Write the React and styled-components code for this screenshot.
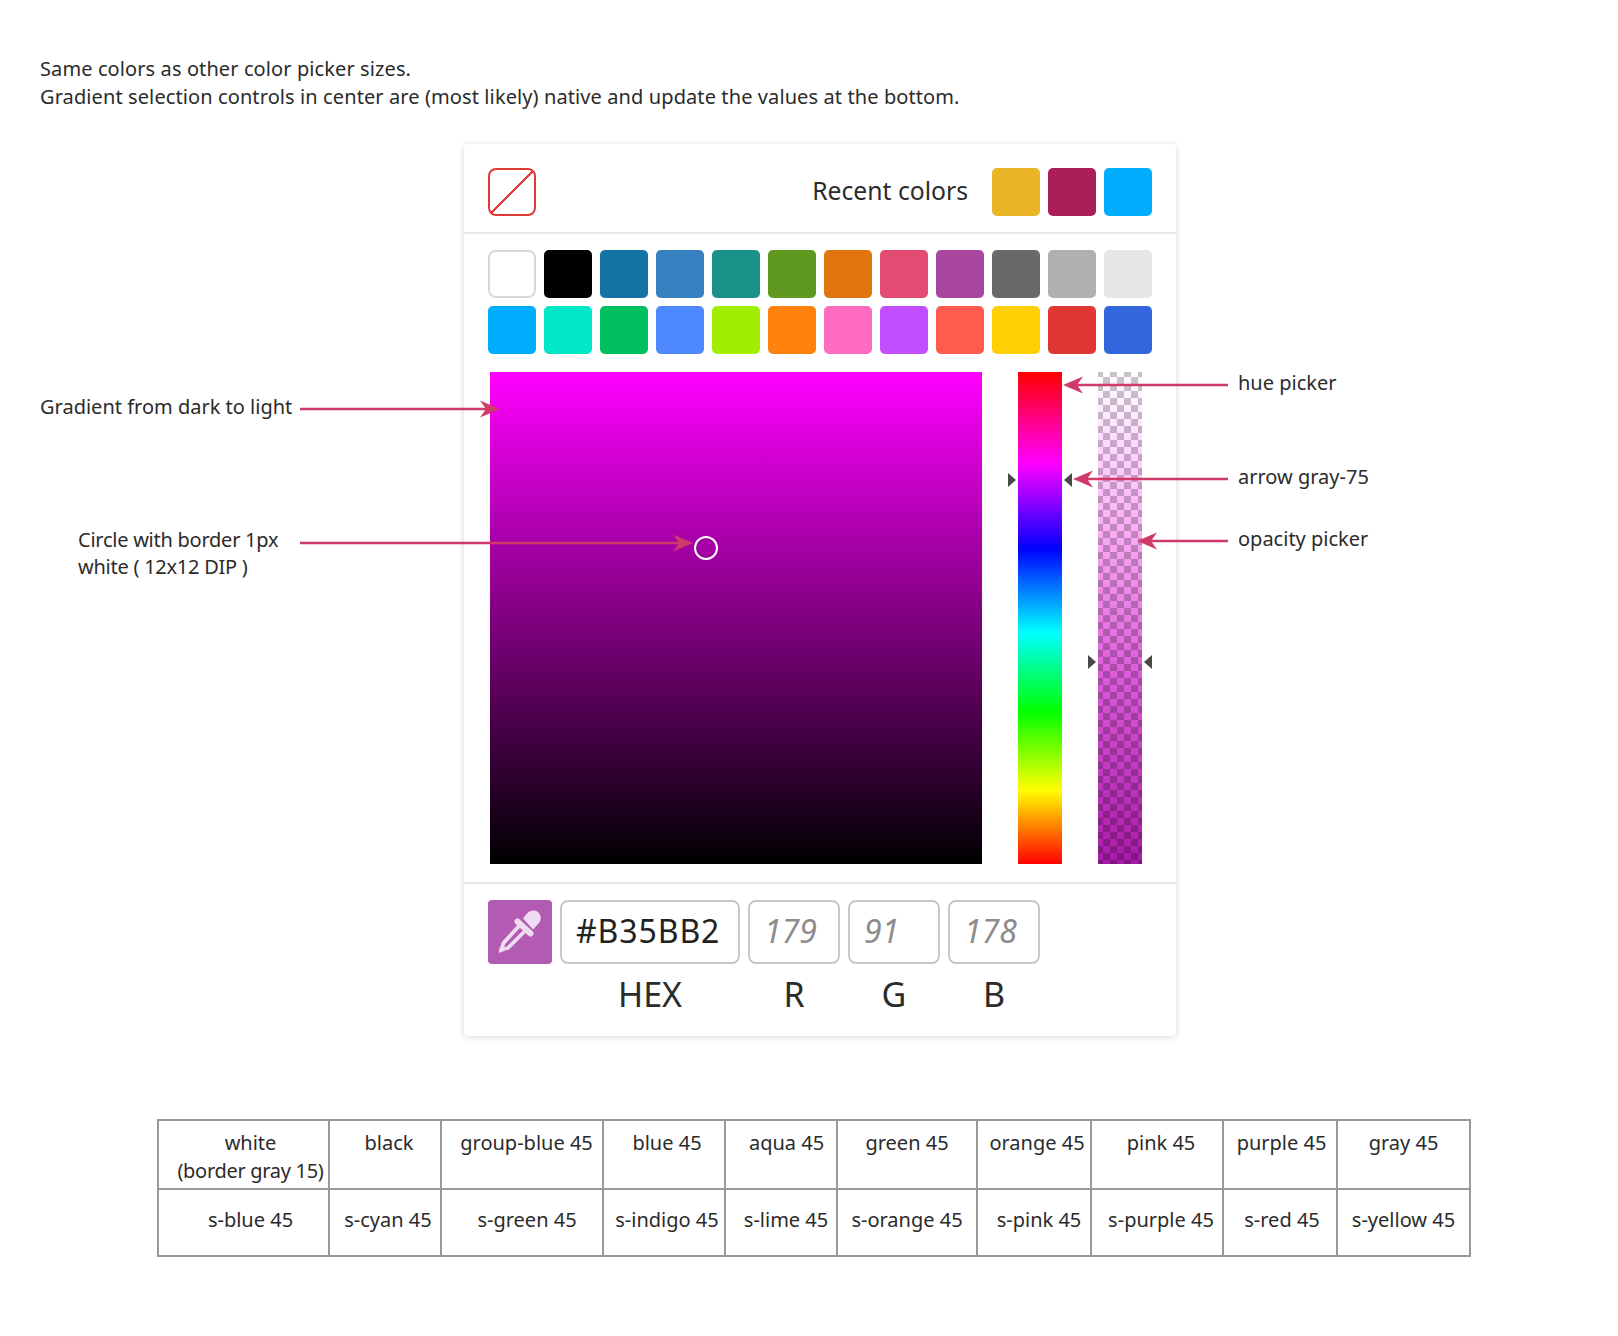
import React from "react";
import styled, { createGlobalStyle } from "styled-components";

const Global = createGlobalStyle`
  html, body { margin: 0; padding: 0; background: #fff; }
  body { font-family: "Noto Sans", "Open Sans", sans-serif; color: #2b2b2b; }
  * { box-sizing: border-box; }
`;

const Page = styled.div`
  position: relative;
  width: 1618px;
  min-height: 1336px;
  padding: 55px 40px 0;
`;
const Intro = styled.p`
  margin: 0 0 33px;
  font-size: 20px;
  line-height: 28px;
  letter-spacing: 0.1px;
`;
const Workspace = styled.div`
  display: grid;
  grid-template-columns: 424px 712px 1fr;
`;
const Side = styled.div`
  display: flex;
  flex-direction: column;
  padding-left: ${(p) => p.$pad || 0}px;
`;
const Note = styled.div`
  margin-top: ${(p) => p.$top}px;
  margin-left: ${(p) => p.$indent || 0}px;
  font-size: 20px;
  line-height: ${(p) => (p.$tight ? 27 : 28)}px;
  letter-spacing: ${(p) => (p.$tight ? "-0.25px" : "0")};
`;
const Panel = styled.div`
  height: 892px;
  background: #fff;
  border-radius: 4px;
  box-shadow: 0 1px 6px rgba(0, 0, 0, 0.16);
  display: flex;
  flex-direction: column;
`;
const Header = styled.div`
  height: 90px;
  padding: 24px 24px 0;
  border-bottom: 2px solid #e8e8e8;
  display: flex;
  align-items: flex-start;
  gap: 8px;
`;
const NoColor = styled.div`
  width: 48px;
  height: 48px;
  border: 2px solid #e03a36;
  border-radius: 8px;
  background: linear-gradient(to bottom right, transparent calc(50% - 1.2px), #e03a36 calc(50% - 1.2px), #e03a36 calc(50% + 1.2px), transparent calc(50% + 1.2px));
  margin-right: auto;
`;
const RecentLabel = styled.span`
  font-size: 24.7px;
  line-height: 46px;
  margin-right: 16px;
`;
const Swatch = styled.div`
  width: 48px;
  height: 48px;
  background: ${(p) => p.$color};
  border: ${(p) => (p.$outlined ? "2px solid #d8d8d8" : "none")};
  border-radius: ${(p) => (p.$outlined ? "8px" : "5px")};
`;
const SwatchGrid = styled.div`
  display: grid;
  grid-template-columns: repeat(12, 48px);
  gap: 8px;
  padding: 16px 24px 0;
`;
const Pickers = styled.div`
  display: flex;
  gap: 36px;
  margin: 18px 0 0 26px;
  height: 492px;
`;
const Field = styled.div`
  position: relative;
  width: 492px;
  height: 492px;
  background: linear-gradient(#ff00ff, #000);
`;
const Handle = styled.div`
  position: absolute;
  left: 204px;
  top: 164px;
  width: 24px;
  height: 24px;
  border: 2px solid #fff;
  border-radius: 50%;
`;
const Track = styled.div`
  position: relative;
  width: 44px;
  height: 492px;
`;
const HueTrack = styled(Track)`
  background: linear-gradient(#ff0000 0%, #ff00ff 18.5%, #0000ff 36%, #00ffff 53%, #00ff00 69%, #ffff00 85%, #ff0000 100%);
`;
const OpacityTrack = styled(Track)`
  background-image:
    linear-gradient(#ffffff 0%, #ffd0ff 18%, #fbb0f5 31%, #dd5fdb 60%, #a81aa8 100%),
    repeating-conic-gradient(#ffffff 0 25%, #c6c6c6 0 50%);
  background-size: 100% 100%, 14px 14px;
  background-position: 0 0, -2px -2px;
  background-blend-mode: multiply, normal;
`;
const Caret = styled.span`
  position: absolute;
  top: ${(p) => p.$top}px;
  ${(p) => p.$side}: -10px;
  width: 0;
  height: 0;
  border-top: 7.5px solid transparent;
  border-bottom: 7.5px solid transparent;
  ${(p) => (p.$side === "left" ? "border-left: 8px solid #4a4a4a;" : "border-right: 8px solid #4a4a4a;")}
`;
const Footer = styled.div`
  margin-top: 18px;
  border-top: 2px solid #e8e8e8;
  padding: 16px 24px 0;
  display: grid;
  grid-template-columns: 64px 180px 92px 92px 92px;
  grid-template-rows: 64px 40px;
  column-gap: 8px;
  row-gap: 10px;
`;
const Dropper = styled.div`
  width: 64px;
  height: 64px;
  border-radius: 4px;
  background: #b35bb2;
  display: flex;
`;
const Input = styled.input`
  width: 100%;
  height: 64px;
  border: 2px solid #c8c8c8;
  border-radius: 8px;
  background: #fff;
  padding: 0 0 3px 14px;
  font-family: "Noto Sans", sans-serif;
  font-size: 32px;
  letter-spacing: ${(p) => p.$spacing}px;
  color: #222;
  outline: none;
  &::placeholder { color: #8c8c8c; font-style: italic; opacity: 1; }
`;
const FieldLabel = styled.div`
  font-size: 34px;
  line-height: 40px;
  text-align: center;
  grid-column: ${(p) => p.$col || "auto"};
`;
const Legend = styled.table`
  margin: 83px 0 0 117px;
  border-collapse: collapse;
  table-layout: fixed;
  width: 1314px;
  font-size: 20px;
  line-height: 28px;
`;
const Cell = styled.td`
  border: 2px solid #999;
  vertical-align: top;
  text-align: center;
  white-space: nowrap;
  height: ${(p) => p.$h}px;
  padding-top: ${(p) => p.$pt}px;
  padding-left: ${(p) => p.$left}px;
  padding-right: 0;
`;
const Narrow = styled.span`
  letter-spacing: -0.3px;
`;
const Overlay = styled.svg`
  position: absolute;
  left: 0;
  top: 0;
  pointer-events: none;
`;

const row1 = ["#1474A4", "#3680BF", "#1A9287", "#5F9920", "#E0740F", "#E34B73", "#A846A0", "#696969", "#B0B0B0", "#E6E6E6"];
const row2 = ["#00ADFF", "#00E8C8", "#00BF5F", "#4D88FF", "#A0EE00", "#FF820E", "#FF6BC1", "#C24FFF", "#FF5B4F", "#FFCE05", "#DF3833", "#3366DD"];
const colWidths = [171, 112, 162, 122, 112, 140, 114, 132, 114, 133];
const labels1 = [
  ["black", 8], ["group-blue 45", 9], ["blue 45", 6], ["aqua 45", 11], ["green 45", 0],
  ["orange 45", 6], ["pink 45", 8], ["purple 45", 3], ["gray 45", 0],
];
const labels2 = [
  ["s-blue 45", 14], ["s-cyan 45", 6], ["s-green 45", 10], ["s-indigo 45", 6], ["s-lime 45", 10],
  ["s-orange 45", 0], ["s-pink 45", 10], ["s-purple 45", 8], ["s-red 45", 4], ["s-yellow 45", 0],
];

const ARROW = "#d03a68";
const Arrow = ({ from, to, y }) => {
  const d = to > from ? 1 : -1;
  return (
    <g fill={ARROW}>
      <rect x={Math.min(from, to - d * 10)} y={y - 1.25} width={Math.abs(to - d * 10 - from)} height="2.5" />
      <path d={`M${to} ${y} L${to - d * 20} ${y - 8.5} L${to - d * 14} ${y} L${to - d * 20} ${y + 8.5} Z`} />
    </g>
  );
};

export default function App() {
  return (
    <Page>
      <Global />
      <Intro>
        Same colors as other color picker sizes.
        <br />
        Gradient selection controls in center are (most likely) native and update the values at the bottom.
      </Intro>
      <Workspace>
        <Side>
          <Note $top={249}>Gradient from dark to light</Note>
          <Note $top={105} $indent={38} $tight>
            Circle with border 1px
            <br />
            white ( 12x12 DIP )
          </Note>
        </Side>
        <Panel>
          <Header>
            <NoColor />
            <RecentLabel>Recent colors</RecentLabel>
            <Swatch $color="#EAB627" />
            <Swatch $color="#AC1E57" />
            <Swatch $color="#00ADFF" />
          </Header>
          <SwatchGrid>
            <Swatch $color="#fff" $outlined />
            <Swatch $color="#000" />
            {row1.map((c) => (
              <Swatch key={c} $color={c} />
            ))}
            {row2.map((c) => (
              <Swatch key={c + "2"} $color={c} />
            ))}
          </SwatchGrid>
          <Pickers>
            <Field>
              <Handle />
            </Field>
            <HueTrack>
              <Caret $side="left" $top={101} />
              <Caret $side="right" $top={101} />
            </HueTrack>
            <OpacityTrack>
              <Caret $side="left" $top={283} />
              <Caret $side="right" $top={283} />
            </OpacityTrack>
          </Pickers>
          <Footer>
            <Dropper>
              <svg width="64" height="64" viewBox="0 0 64 64">
                <path fill="#f0dcf0" d="M35 18.5 L39 13.5 C42 10 47.5 9.5 50.5 12.5 C53.5 15.5 53.5 20 50.5 23.5 L45 29.5 Z" />
                <path stroke="#f0dcf0" strokeWidth="6" strokeLinecap="round" d="M29.5 21.5 L42.5 33.5" />
                <path fill="none" stroke="#f0dcf0" strokeWidth="3.8" strokeLinejoin="round" d="M31 26 L15.5 43 L13.5 49.5 L20 48 L37 31" />
                <path fill="#f0dcf0" d="M10.5 53 L12 47 L16.5 51 Z" />
              </svg>
            </Dropper>
            <Input readOnly value="#B35BB2" $spacing={0.9} />
            <Input readOnly placeholder="179" $spacing={0} />
            <Input readOnly placeholder="91" $spacing={0} />
            <Input readOnly placeholder="178" $spacing={0} />
            <FieldLabel $col={2}>HEX</FieldLabel>
            <FieldLabel>R</FieldLabel>
            <FieldLabel>G</FieldLabel>
            <FieldLabel>B</FieldLabel>
          </Footer>
        </Panel>
        <Side $pad={62}>
          <Note $top={225}>hue picker</Note>
          <Note $top={66}>arrow gray-75</Note>
          <Note $top={34}>opacity picker</Note>
        </Side>
      </Workspace>
      <Legend>
        <colgroup>
          {colWidths.map((w, i) => (
            <col key={i} style={{ width: w }} />
          ))}
        </colgroup>
        <tbody>
          <tr>
            <Cell $h={69} $pt={8} $left={14}>
              white
              <br />
              <Narrow>(border gray 15)</Narrow>
            </Cell>
            {labels1.map(([t, left]) => (
              <Cell key={t} $h={69} $pt={8} $left={left}>{t}</Cell>
            ))}
          </tr>
          <tr>
            {labels2.map(([t, left]) => (
              <Cell key={t} $h={67} $pt={16} $left={left}>{t}</Cell>
            ))}
          </tr>
        </tbody>
      </Legend>
      <Overlay width="1618" height="1336">
        <Arrow from={300} to={500} y={409} />
        <Arrow from={300} to={693} y={543} />
        <Arrow from={1228} to={1063} y={385} />
        <Arrow from={1228} to={1073} y={479} />
        <Arrow from={1228} to={1137} y={541} />
      </Overlay>
    </Page>
  );
}
